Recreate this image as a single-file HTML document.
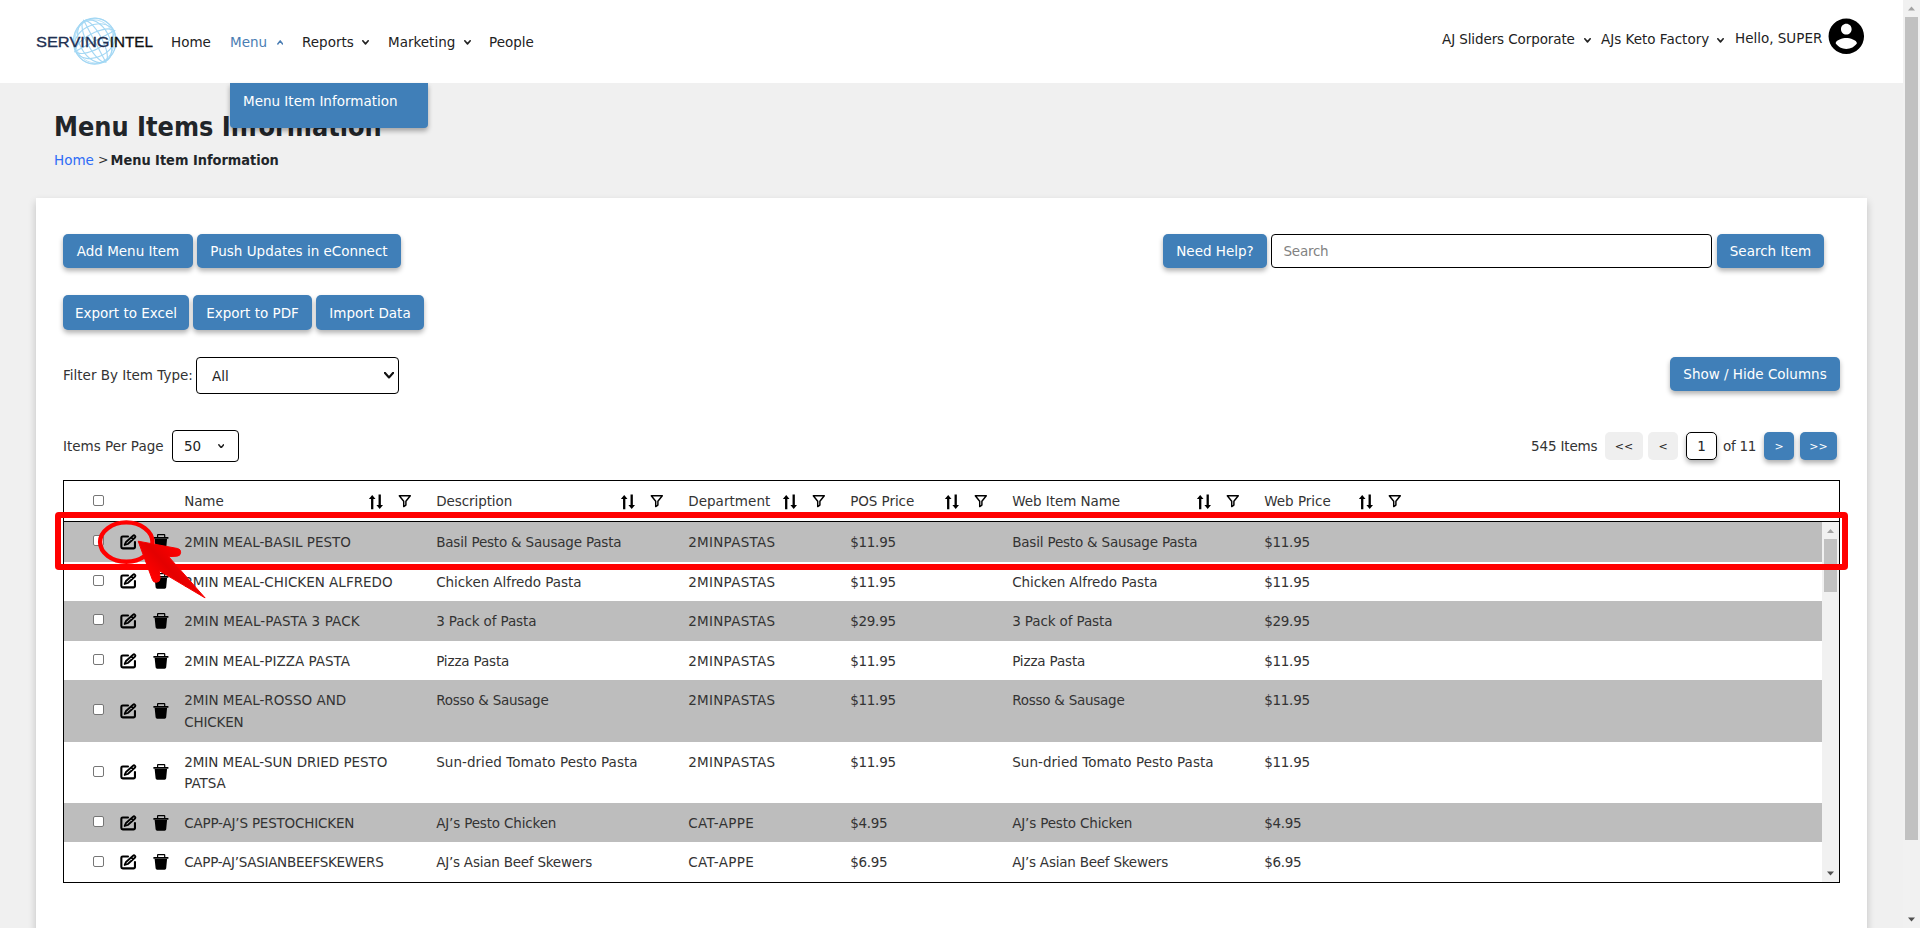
<!DOCTYPE html>
<html lang="en">
<head>
<meta charset="utf-8">
<title>Menu Items Information</title>
<style>
*{box-sizing:border-box}
html,body{margin:0;padding:0}
body{width:1920px;height:928px;overflow:hidden;background:#f0f0f0;font-family:"DejaVu Sans","Liberation Sans",sans-serif;font-size:13.5px;color:#333;position:relative}
.t{position:absolute;white-space:nowrap;line-height:20px;height:20px}
#hdr{position:absolute;left:0;top:0;width:1903px;height:83px;background:#fff}
.btn{position:absolute;height:34px;line-height:35px;background:#407fb8;color:#fff;border-radius:5px;text-align:center;white-space:nowrap;box-shadow:0 3px 5px rgba(0,0,0,.3);font-size:13.5px}
#card{position:absolute;left:36px;top:198px;width:1831px;height:740px;background:#fff;box-shadow:0 4px 8px rgba(0,0,0,.2)}
.box{position:absolute;border:1px solid #000;border-radius:4px;background:#fff}
.pg{position:absolute;top:432px;height:28px;line-height:29px;border-radius:5px;text-align:center;font-size:11px}
.pgg{background:#efefef;color:#222}
.pgb{background:#407fb8;color:#fff;box-shadow:0 3px 5px rgba(0,0,0,.32)}
#tbl{position:absolute;left:63px;top:480px;width:1777px;height:403px;border:1px solid #000;background:#fff;overflow:hidden}
.row{position:absolute;left:0;width:1758px}
.g{background:#bdbdbd}
.c{position:absolute;white-space:nowrap;line-height:22px;height:22px}
.cb{position:absolute;left:29px;width:11px;height:11px;border:1px solid #767676;border-radius:2px;background:#fff}
.ic{position:absolute;display:block}
</style>
</head>
<body>
<div id="hdr">
<svg class="ic" style="left:30px;top:10px" width="130" height="64" viewBox="30 10 130 64">
<g fill="none" stroke="#9fd6f4" stroke-width="1.15" opacity="0.95">
<ellipse cx="94.7" cy="41.2" rx="21.3" ry="23"/>
<ellipse cx="93.9" cy="41.8" rx="20.2" ry="22" stroke-width="0.8"/>
<ellipse cx="95.6" cy="40.6" rx="20.6" ry="22.4" stroke-width="0.7"/>
<g transform="rotate(-28 94.7 41.2)">
<ellipse cx="94.7" cy="41.2" rx="21.3" ry="8"/>
<ellipse cx="94.7" cy="41.2" rx="21.6" ry="16"/>
<ellipse cx="94.7" cy="41.2" rx="7.5" ry="23"/>
<ellipse cx="94.7" cy="41.2" rx="15" ry="23"/>
<line x1="71.5" y1="41.2" x2="118" y2="41.2"/>
<line x1="94.7" y1="17" x2="94.7" y2="65.5"/>
</g>
</g>
<text x="36" y="46.5" font-family="'Liberation Sans',sans-serif" font-size="13.9" font-weight="400" fill="#1f3052" stroke="#1f3052" stroke-width="0.3" textLength="73.5" lengthAdjust="spacingAndGlyphs">SERVING</text>
<text x="109.7" y="46.5" font-family="'Liberation Sans',sans-serif" font-size="13.9" font-weight="400" fill="#111" stroke="#111" stroke-width="0.3" textLength="43.2" lengthAdjust="spacingAndGlyphs">INTEL</text>
</svg>
<span class="t" style="left:171px;top:32px;color:#222">Home</span>
<span class="t" style="left:230px;top:32px;color:#4a7db3">Menu</span>
<span class="t" style="left:302px;top:32px;color:#222">Reports</span>
<span class="t" style="left:388px;top:32px;color:#222">Marketing</span>
<span class="t" style="left:489px;top:32px;color:#222">People</span>
<svg class="ic" style="left:277px;top:39.6px" width="6.4" height="5.2" viewBox="0 0 6.4 5.2"><polyline points="0.8,4.0 3.2,0.9 5.6000000000000005,4.0" fill="none" stroke="#4a7db3" stroke-width="1.5" stroke-linecap="round" stroke-linejoin="round"/></svg>
<svg class="ic" style="left:362px;top:40px" width="7" height="5" viewBox="0 0 7 5"><polyline points="0.8,0.8 3.5,3.9 6.2,0.8" fill="none" stroke="#222" stroke-width="1.6" stroke-linecap="round" stroke-linejoin="round"/></svg>
<svg class="ic" style="left:464px;top:40px" width="7" height="5" viewBox="0 0 7 5"><polyline points="0.8,0.8 3.5,3.9 6.2,0.8" fill="none" stroke="#222" stroke-width="1.6" stroke-linecap="round" stroke-linejoin="round"/></svg>
<span class="t" style="left:1442px;top:29px;color:#222;letter-spacing:-0.1px">AJ Sliders Corporate</span>
<svg class="ic" style="left:1584px;top:38px" width="7" height="5" viewBox="0 0 7 5"><polyline points="0.8,0.8 3.5,3.9 6.2,0.8" fill="none" stroke="#222" stroke-width="1.6" stroke-linecap="round" stroke-linejoin="round"/></svg>
<span class="t" style="left:1601px;top:29px;color:#222">AJs Keto Factory</span>
<svg class="ic" style="left:1717px;top:38px" width="7" height="5" viewBox="0 0 7 5"><polyline points="0.8,0.8 3.5,3.9 6.2,0.8" fill="none" stroke="#222" stroke-width="1.6" stroke-linecap="round" stroke-linejoin="round"/></svg>
<span class="t" style="left:1735px;top:28px;color:#222">Hello, SUPER</span>
<svg class="ic" style="left:1824.6px;top:14.8px" width="42.6" height="42.6" viewBox="0 0 24 24"><path fill="#000" d="M12 2C6.48 2 2 6.48 2 12s4.48 10 10 10 10-4.48 10-10S17.52 2 12 2zm0 3c1.66 0 3 1.34 3 3s-1.34 3-3 3-3-1.34-3-3 1.34-3 3-3zm0 14.2c-2.5 0-4.71-1.28-6-3.22.03-1.99 4-3.08 6-3.08 1.99 0 5.97 1.09 6 3.08-1.29 1.94-3.5 3.22-6 3.22z"/></svg>
</div>
<div class="t" id="ttl" style="left:54px;top:109px;height:36px;line-height:36px;font-family:DejaVu Sans Condensed,DejaVu Sans,sans-serif;font-size:26.8px;font-weight:bold;color:#212529">Menu Items Information</div>
<span class="t" style="left:54px;top:150px;color:#2e6cf6">Home</span><span class="t" style="left:98px;top:150px;color:#333;font-size:12.5px">&gt;</span><b class="t" style="left:110.5px;top:150px;color:#212529;font-family:DejaVu Sans Condensed,DejaVu Sans,sans-serif;font-size:14.4px">Menu Item Information</b>
<div style="position:absolute;left:230px;top:83px;width:198px;height:45px;background:#407fb8;border-radius:0 0 4px 4px;box-shadow:0 3px 5px rgba(0,0,0,.32)"><span class="t" style="left:13px;top:8px;color:#fff">Menu Item Information</span></div>
<div id="card"></div>
<div class="btn" style="left:63px;top:234px;width:130px;height:34px;line-height:35px">Add Menu Item</div>
<div class="btn" style="left:197px;top:234px;width:204px;height:34px;line-height:35px">Push Updates in eConnect</div>
<div class="btn" style="left:1163px;top:234px;width:104px;height:34px;line-height:35px">Need Help?</div>
<div class="box" style="left:1271px;top:234px;width:441px;height:34px"><span class="t" style="left:11.5px;top:6px;color:#828282;letter-spacing:-0.25px">Search</span></div>
<div class="btn" style="left:1717px;top:234px;width:107px;height:34px;line-height:35px">Search Item</div>
<div class="btn" style="left:63px;top:295px;width:126px;height:35px;line-height:36px">Export to Excel</div>
<div class="btn" style="left:193px;top:295px;width:119px;height:35px;line-height:36px">Export to PDF</div>
<div class="btn" style="left:316px;top:295px;width:108px;height:35px;line-height:36px">Import Data</div>
<span class="t" style="left:63px;top:365px">Filter By Item Type:</span>
<div class="box" style="left:196px;top:357px;width:203px;height:37px"><span class="t" style="left:15px;top:8px;color:#222">All</span></div>
<svg class="ic" style="left:384.4px;top:372px" width="10" height="6.6" viewBox="0 0 10 6.6"><polyline points="0.8,0.8 5.0,5.5 9.2,0.8" fill="none" stroke="#111" stroke-width="2.1" stroke-linecap="round" stroke-linejoin="round"/></svg>
<div class="btn" style="left:1670px;top:357px;width:170px;height:34px;line-height:35px">Show / Hide Columns</div>
<span class="t" style="left:63px;top:436px">Items Per Page</span>
<div class="box" style="left:172px;top:430px;width:67px;height:32px"><span class="t" style="left:11px;top:5px;color:#222">50</span></div>
<svg class="ic" style="left:217.8px;top:443.6px" width="6.4" height="4.8" viewBox="0 0 6.4 4.8"><polyline points="0.8,0.8 3.2,3.6999999999999997 5.6000000000000005,0.8" fill="none" stroke="#222" stroke-width="1.5" stroke-linecap="round" stroke-linejoin="round"/></svg>
<span class="t" style="left:1531px;top:436px;letter-spacing:-0.15px">545 Items</span>
<div class="pg pgg" style="left:1605px;width:38px">&lt;&lt;</div>
<div class="pg pgg" style="left:1648px;width:30px">&lt;</div>
<div class="box" style="left:1686px;top:432px;width:31px;height:28px;border-radius:5px;box-shadow:0 3px 5px rgba(0,0,0,.3);text-align:center;line-height:26px;color:#222">1</div>
<span class="t" style="left:1723px;top:436px;letter-spacing:-0.3px">of 11</span>
<div class="pg pgb" style="left:1764px;width:30px">&gt;</div>
<div class="pg pgb" style="left:1800px;width:37px">&gt;&gt;</div>
<div id="tbl">
<div class="row g" style="top:41.0px;height:39.6px"></div>
<div class="row g" style="top:120.2px;height:39.6px"></div>
<div class="row g" style="top:199.4px;height:61.2px"></div>
<div class="row g" style="top:321.8px;height:39.6px"></div>
<div style="position:absolute;left:0;top:40px;width:1775px;height:1px;background:#000"></div>
<div class="cb" style="top:14px"></div>
<span class="c" style="left:120.2px;top:9px;letter-spacing:-0.11px">Name</span>
<svg class="ic" style="left:304px;top:12.5px" width="16" height="16" viewBox="0 0 16 16"><path d="M4.2 0.9 L7.5 4.9 H5.35 V15.25 H3.05 V4.9 H0.9 Z M11.7 14.9 L8.4 10.9 H10.55 V0.5 H12.85 V10.9 H15 Z" fill="#000"/></svg>
<svg class="ic" style="left:333.8px;top:13px" width="14" height="14" viewBox="0 0 14 14"><path d="M1.3 1.7 H12.3 L7.9 7.2 V11.1 L5.7 12.6 V7.2 Z" fill="none" stroke="#000" stroke-width="1.45" stroke-linejoin="round"/></svg>
<span class="c" style="left:372.2px;top:9px;letter-spacing:-0.08px">Description</span>
<svg class="ic" style="left:556px;top:12.5px" width="16" height="16" viewBox="0 0 16 16"><path d="M4.2 0.9 L7.5 4.9 H5.35 V15.25 H3.05 V4.9 H0.9 Z M11.7 14.9 L8.4 10.9 H10.55 V0.5 H12.85 V10.9 H15 Z" fill="#000"/></svg>
<svg class="ic" style="left:585.8px;top:13px" width="14" height="14" viewBox="0 0 14 14"><path d="M1.3 1.7 H12.3 L7.9 7.2 V11.1 L5.7 12.6 V7.2 Z" fill="none" stroke="#000" stroke-width="1.45" stroke-linejoin="round"/></svg>
<span class="c" style="left:624.2px;top:9px;letter-spacing:0.05px">Department</span>
<svg class="ic" style="left:718px;top:12.5px" width="16" height="16" viewBox="0 0 16 16"><path d="M4.2 0.9 L7.5 4.9 H5.35 V15.25 H3.05 V4.9 H0.9 Z M11.7 14.9 L8.4 10.9 H10.55 V0.5 H12.85 V10.9 H15 Z" fill="#000"/></svg>
<svg class="ic" style="left:747.8px;top:13px" width="14" height="14" viewBox="0 0 14 14"><path d="M1.3 1.7 H12.3 L7.9 7.2 V11.1 L5.7 12.6 V7.2 Z" fill="none" stroke="#000" stroke-width="1.45" stroke-linejoin="round"/></svg>
<span class="c" style="left:786.2px;top:9px;letter-spacing:-0.06px">POS Price</span>
<svg class="ic" style="left:880px;top:12.5px" width="16" height="16" viewBox="0 0 16 16"><path d="M4.2 0.9 L7.5 4.9 H5.35 V15.25 H3.05 V4.9 H0.9 Z M11.7 14.9 L8.4 10.9 H10.55 V0.5 H12.85 V10.9 H15 Z" fill="#000"/></svg>
<svg class="ic" style="left:909.8px;top:13px" width="14" height="14" viewBox="0 0 14 14"><path d="M1.3 1.7 H12.3 L7.9 7.2 V11.1 L5.7 12.6 V7.2 Z" fill="none" stroke="#000" stroke-width="1.45" stroke-linejoin="round"/></svg>
<span class="c" style="left:948.2px;top:9px;letter-spacing:-0.05px">Web Item Name</span>
<svg class="ic" style="left:1132px;top:12.5px" width="16" height="16" viewBox="0 0 16 16"><path d="M4.2 0.9 L7.5 4.9 H5.35 V15.25 H3.05 V4.9 H0.9 Z M11.7 14.9 L8.4 10.9 H10.55 V0.5 H12.85 V10.9 H15 Z" fill="#000"/></svg>
<svg class="ic" style="left:1161.8px;top:13px" width="14" height="14" viewBox="0 0 14 14"><path d="M1.3 1.7 H12.3 L7.9 7.2 V11.1 L5.7 12.6 V7.2 Z" fill="none" stroke="#000" stroke-width="1.45" stroke-linejoin="round"/></svg>
<span class="c" style="left:1200.2px;top:9px">Web Price</span>
<svg class="ic" style="left:1294px;top:12.5px" width="16" height="16" viewBox="0 0 16 16"><path d="M4.2 0.9 L7.5 4.9 H5.35 V15.25 H3.05 V4.9 H0.9 Z M11.7 14.9 L8.4 10.9 H10.55 V0.5 H12.85 V10.9 H15 Z" fill="#000"/></svg>
<svg class="ic" style="left:1323.8px;top:13px" width="14" height="14" viewBox="0 0 14 14"><path d="M1.3 1.7 H12.3 L7.9 7.2 V11.1 L5.7 12.6 V7.2 Z" fill="none" stroke="#000" stroke-width="1.45" stroke-linejoin="round"/></svg>
<div class="cb" style="top:54px"></div>
<svg class="ic" style="left:55px;top:51.8px" width="18" height="18" viewBox="0 0 18 18"><path d="M9.0 3.45 H3.75 A1.4 1.4 0 0 0 2.35 4.85 V13.95 A1.4 1.4 0 0 0 3.75 15.35 H14.55 A1.4 1.4 0 0 0 15.95 13.95 V9.0" fill="none" stroke="#000" stroke-width="2.1" stroke-linecap="round"/><g transform="translate(14.95,3.75) rotate(138.5)"><path d="M0,-1.35 H9.4 L12.4,0 L9.4,1.35 H0 A1.35 1.35 0 0 1 0,-1.35 Z M2.5,-1.35 V1.35" fill="none" stroke="#000" stroke-width="1.8" stroke-linejoin="round"/></g></svg>
<svg class="ic" style="left:89px;top:51.8px" width="16" height="18" viewBox="0 0 16 18"><path d="M0.4 4 H4 V2 A1 1 0 0 1 5 1 H11.3 A1 1 0 0 1 12.3 2 V4 H15.4 V5.7 H0.4 Z M5.2 4 H11.1 V2.2 H5.2 Z M1.6 5.6 H14.1 L13.2 15.3 A1.6 1.6 0 0 1 11.6 16.75 H4.2 A1.6 1.6 0 0 1 2.6 15.3 Z" fill="#000" fill-rule="evenodd"/></svg>
<span class="c" style="left:120.2px;top:50px">2MIN MEAL-BASIL PESTO</span>
<span class="c" style="left:372.2px;top:50px;letter-spacing:-0.19px">Basil Pesto &amp; Sausage Pasta</span>
<span class="c" style="left:624.2px;top:50px;letter-spacing:0.28px">2MINPASTAS</span>
<span class="c" style="left:786.2px;top:50px;letter-spacing:-0.28px">$11.95</span>
<span class="c" style="left:948.2px;top:50px;letter-spacing:-0.19px">Basil Pesto &amp; Sausage Pasta</span>
<span class="c" style="left:1200.2px;top:50px;letter-spacing:-0.28px">$11.95</span>
<div class="cb" style="top:94px"></div>
<svg class="ic" style="left:55px;top:91.4px" width="18" height="18" viewBox="0 0 18 18"><path d="M9.0 3.45 H3.75 A1.4 1.4 0 0 0 2.35 4.85 V13.95 A1.4 1.4 0 0 0 3.75 15.35 H14.55 A1.4 1.4 0 0 0 15.95 13.95 V9.0" fill="none" stroke="#000" stroke-width="2.1" stroke-linecap="round"/><g transform="translate(14.95,3.75) rotate(138.5)"><path d="M0,-1.35 H9.4 L12.4,0 L9.4,1.35 H0 A1.35 1.35 0 0 1 0,-1.35 Z M2.5,-1.35 V1.35" fill="none" stroke="#000" stroke-width="1.8" stroke-linejoin="round"/></g></svg>
<svg class="ic" style="left:89px;top:91.4px" width="16" height="18" viewBox="0 0 16 18"><path d="M0.4 4 H4 V2 A1 1 0 0 1 5 1 H11.3 A1 1 0 0 1 12.3 2 V4 H15.4 V5.7 H0.4 Z M5.2 4 H11.1 V2.2 H5.2 Z M1.6 5.6 H14.1 L13.2 15.3 A1.6 1.6 0 0 1 11.6 16.75 H4.2 A1.6 1.6 0 0 1 2.6 15.3 Z" fill="#000" fill-rule="evenodd"/></svg>
<span class="c" style="left:120.2px;top:90px">2MIN MEAL-CHICKEN ALFREDO</span>
<span class="c" style="left:372.2px;top:90px;letter-spacing:-0.06px">Chicken Alfredo Pasta</span>
<span class="c" style="left:624.2px;top:90px;letter-spacing:0.28px">2MINPASTAS</span>
<span class="c" style="left:786.2px;top:90px;letter-spacing:-0.28px">$11.95</span>
<span class="c" style="left:948.2px;top:90px;letter-spacing:-0.06px">Chicken Alfredo Pasta</span>
<span class="c" style="left:1200.2px;top:90px;letter-spacing:-0.28px">$11.95</span>
<div class="cb" style="top:133px"></div>
<svg class="ic" style="left:55px;top:131.0px" width="18" height="18" viewBox="0 0 18 18"><path d="M9.0 3.45 H3.75 A1.4 1.4 0 0 0 2.35 4.85 V13.95 A1.4 1.4 0 0 0 3.75 15.35 H14.55 A1.4 1.4 0 0 0 15.95 13.95 V9.0" fill="none" stroke="#000" stroke-width="2.1" stroke-linecap="round"/><g transform="translate(14.95,3.75) rotate(138.5)"><path d="M0,-1.35 H9.4 L12.4,0 L9.4,1.35 H0 A1.35 1.35 0 0 1 0,-1.35 Z M2.5,-1.35 V1.35" fill="none" stroke="#000" stroke-width="1.8" stroke-linejoin="round"/></g></svg>
<svg class="ic" style="left:89px;top:131.0px" width="16" height="18" viewBox="0 0 16 18"><path d="M0.4 4 H4 V2 A1 1 0 0 1 5 1 H11.3 A1 1 0 0 1 12.3 2 V4 H15.4 V5.7 H0.4 Z M5.2 4 H11.1 V2.2 H5.2 Z M1.6 5.6 H14.1 L13.2 15.3 A1.6 1.6 0 0 1 11.6 16.75 H4.2 A1.6 1.6 0 0 1 2.6 15.3 Z" fill="#000" fill-rule="evenodd"/></svg>
<span class="c" style="left:120.2px;top:129px;letter-spacing:0.09px">2MIN MEAL-PASTA 3 PACK</span>
<span class="c" style="left:372.2px;top:129px;letter-spacing:-0.12px">3 Pack of Pasta</span>
<span class="c" style="left:624.2px;top:129px;letter-spacing:0.28px">2MINPASTAS</span>
<span class="c" style="left:786.2px;top:129px;letter-spacing:-0.28px">$29.95</span>
<span class="c" style="left:948.2px;top:129px;letter-spacing:-0.12px">3 Pack of Pasta</span>
<span class="c" style="left:1200.2px;top:129px;letter-spacing:-0.28px">$29.95</span>
<div class="cb" style="top:173px"></div>
<svg class="ic" style="left:55px;top:170.6px" width="18" height="18" viewBox="0 0 18 18"><path d="M9.0 3.45 H3.75 A1.4 1.4 0 0 0 2.35 4.85 V13.95 A1.4 1.4 0 0 0 3.75 15.35 H14.55 A1.4 1.4 0 0 0 15.95 13.95 V9.0" fill="none" stroke="#000" stroke-width="2.1" stroke-linecap="round"/><g transform="translate(14.95,3.75) rotate(138.5)"><path d="M0,-1.35 H9.4 L12.4,0 L9.4,1.35 H0 A1.35 1.35 0 0 1 0,-1.35 Z M2.5,-1.35 V1.35" fill="none" stroke="#000" stroke-width="1.8" stroke-linejoin="round"/></g></svg>
<svg class="ic" style="left:89px;top:170.6px" width="16" height="18" viewBox="0 0 16 18"><path d="M0.4 4 H4 V2 A1 1 0 0 1 5 1 H11.3 A1 1 0 0 1 12.3 2 V4 H15.4 V5.7 H0.4 Z M5.2 4 H11.1 V2.2 H5.2 Z M1.6 5.6 H14.1 L13.2 15.3 A1.6 1.6 0 0 1 11.6 16.75 H4.2 A1.6 1.6 0 0 1 2.6 15.3 Z" fill="#000" fill-rule="evenodd"/></svg>
<span class="c" style="left:120.2px;top:169px">2MIN MEAL-PIZZA PASTA</span>
<span class="c" style="left:372.2px;top:169px;letter-spacing:-0.16px">Pizza Pasta</span>
<span class="c" style="left:624.2px;top:169px;letter-spacing:0.28px">2MINPASTAS</span>
<span class="c" style="left:786.2px;top:169px;letter-spacing:-0.28px">$11.95</span>
<span class="c" style="left:948.2px;top:169px;letter-spacing:-0.16px">Pizza Pasta</span>
<span class="c" style="left:1200.2px;top:169px;letter-spacing:-0.28px">$11.95</span>
<div class="cb" style="top:223px"></div>
<svg class="ic" style="left:55px;top:221.0px" width="18" height="18" viewBox="0 0 18 18"><path d="M9.0 3.45 H3.75 A1.4 1.4 0 0 0 2.35 4.85 V13.95 A1.4 1.4 0 0 0 3.75 15.35 H14.55 A1.4 1.4 0 0 0 15.95 13.95 V9.0" fill="none" stroke="#000" stroke-width="2.1" stroke-linecap="round"/><g transform="translate(14.95,3.75) rotate(138.5)"><path d="M0,-1.35 H9.4 L12.4,0 L9.4,1.35 H0 A1.35 1.35 0 0 1 0,-1.35 Z M2.5,-1.35 V1.35" fill="none" stroke="#000" stroke-width="1.8" stroke-linejoin="round"/></g></svg>
<svg class="ic" style="left:89px;top:221.0px" width="16" height="18" viewBox="0 0 16 18"><path d="M0.4 4 H4 V2 A1 1 0 0 1 5 1 H11.3 A1 1 0 0 1 12.3 2 V4 H15.4 V5.7 H0.4 Z M5.2 4 H11.1 V2.2 H5.2 Z M1.6 5.6 H14.1 L13.2 15.3 A1.6 1.6 0 0 1 11.6 16.75 H4.2 A1.6 1.6 0 0 1 2.6 15.3 Z" fill="#000" fill-rule="evenodd"/></svg>
<span class="c" style="left:120.2px;top:208px">2MIN MEAL-ROSSO AND</span>
<span class="c" style="left:120.2px;top:230px;letter-spacing:-0.17px">CHICKEN</span>
<span class="c" style="left:372.2px;top:208px;letter-spacing:-0.25px">Rosso &amp; Sausage</span>
<span class="c" style="left:624.2px;top:208px;letter-spacing:0.28px">2MINPASTAS</span>
<span class="c" style="left:786.2px;top:208px;letter-spacing:-0.28px">$11.95</span>
<span class="c" style="left:948.2px;top:208px;letter-spacing:-0.25px">Rosso &amp; Sausage</span>
<span class="c" style="left:1200.2px;top:208px;letter-spacing:-0.28px">$11.95</span>
<div class="cb" style="top:285px"></div>
<svg class="ic" style="left:55px;top:282.2px" width="18" height="18" viewBox="0 0 18 18"><path d="M9.0 3.45 H3.75 A1.4 1.4 0 0 0 2.35 4.85 V13.95 A1.4 1.4 0 0 0 3.75 15.35 H14.55 A1.4 1.4 0 0 0 15.95 13.95 V9.0" fill="none" stroke="#000" stroke-width="2.1" stroke-linecap="round"/><g transform="translate(14.95,3.75) rotate(138.5)"><path d="M0,-1.35 H9.4 L12.4,0 L9.4,1.35 H0 A1.35 1.35 0 0 1 0,-1.35 Z M2.5,-1.35 V1.35" fill="none" stroke="#000" stroke-width="1.8" stroke-linejoin="round"/></g></svg>
<svg class="ic" style="left:89px;top:282.2px" width="16" height="18" viewBox="0 0 16 18"><path d="M0.4 4 H4 V2 A1 1 0 0 1 5 1 H11.3 A1 1 0 0 1 12.3 2 V4 H15.4 V5.7 H0.4 Z M5.2 4 H11.1 V2.2 H5.2 Z M1.6 5.6 H14.1 L13.2 15.3 A1.6 1.6 0 0 1 11.6 16.75 H4.2 A1.6 1.6 0 0 1 2.6 15.3 Z" fill="#000" fill-rule="evenodd"/></svg>
<span class="c" style="left:120.2px;top:270px;letter-spacing:-0.04px">2MIN MEAL-SUN DRIED PESTO</span>
<span class="c" style="left:120.2px;top:291px;letter-spacing:-0.05px">PATSA</span>
<span class="c" style="left:372.2px;top:270px;letter-spacing:0.04px">Sun-dried Tomato Pesto Pasta</span>
<span class="c" style="left:624.2px;top:270px;letter-spacing:0.28px">2MINPASTAS</span>
<span class="c" style="left:786.2px;top:270px;letter-spacing:-0.28px">$11.95</span>
<span class="c" style="left:948.2px;top:270px;letter-spacing:0.04px">Sun-dried Tomato Pesto Pasta</span>
<span class="c" style="left:1200.2px;top:270px;letter-spacing:-0.28px">$11.95</span>
<div class="cb" style="top:335px"></div>
<svg class="ic" style="left:55px;top:332.6px" width="18" height="18" viewBox="0 0 18 18"><path d="M9.0 3.45 H3.75 A1.4 1.4 0 0 0 2.35 4.85 V13.95 A1.4 1.4 0 0 0 3.75 15.35 H14.55 A1.4 1.4 0 0 0 15.95 13.95 V9.0" fill="none" stroke="#000" stroke-width="2.1" stroke-linecap="round"/><g transform="translate(14.95,3.75) rotate(138.5)"><path d="M0,-1.35 H9.4 L12.4,0 L9.4,1.35 H0 A1.35 1.35 0 0 1 0,-1.35 Z M2.5,-1.35 V1.35" fill="none" stroke="#000" stroke-width="1.8" stroke-linejoin="round"/></g></svg>
<svg class="ic" style="left:89px;top:332.6px" width="16" height="18" viewBox="0 0 16 18"><path d="M0.4 4 H4 V2 A1 1 0 0 1 5 1 H11.3 A1 1 0 0 1 12.3 2 V4 H15.4 V5.7 H0.4 Z M5.2 4 H11.1 V2.2 H5.2 Z M1.6 5.6 H14.1 L13.2 15.3 A1.6 1.6 0 0 1 11.6 16.75 H4.2 A1.6 1.6 0 0 1 2.6 15.3 Z" fill="#000" fill-rule="evenodd"/></svg>
<span class="c" style="left:120.2px;top:331px;letter-spacing:-0.19px">CAPP-AJ’S PESTOCHICKEN</span>
<span class="c" style="left:372.2px;top:331px;letter-spacing:-0.17px">AJ’s Pesto Chicken</span>
<span class="c" style="left:624.2px;top:331px;letter-spacing:0.34px">CAT-APPE</span>
<span class="c" style="left:786.2px;top:331px;letter-spacing:-0.29px">$4.95</span>
<span class="c" style="left:948.2px;top:331px;letter-spacing:-0.17px">AJ’s Pesto Chicken</span>
<span class="c" style="left:1200.2px;top:331px;letter-spacing:-0.29px">$4.95</span>
<div class="cb" style="top:375px"></div>
<svg class="ic" style="left:55px;top:372.2px" width="18" height="18" viewBox="0 0 18 18"><path d="M9.0 3.45 H3.75 A1.4 1.4 0 0 0 2.35 4.85 V13.95 A1.4 1.4 0 0 0 3.75 15.35 H14.55 A1.4 1.4 0 0 0 15.95 13.95 V9.0" fill="none" stroke="#000" stroke-width="2.1" stroke-linecap="round"/><g transform="translate(14.95,3.75) rotate(138.5)"><path d="M0,-1.35 H9.4 L12.4,0 L9.4,1.35 H0 A1.35 1.35 0 0 1 0,-1.35 Z M2.5,-1.35 V1.35" fill="none" stroke="#000" stroke-width="1.8" stroke-linejoin="round"/></g></svg>
<svg class="ic" style="left:89px;top:372.2px" width="16" height="18" viewBox="0 0 16 18"><path d="M0.4 4 H4 V2 A1 1 0 0 1 5 1 H11.3 A1 1 0 0 1 12.3 2 V4 H15.4 V5.7 H0.4 Z M5.2 4 H11.1 V2.2 H5.2 Z M1.6 5.6 H14.1 L13.2 15.3 A1.6 1.6 0 0 1 11.6 16.75 H4.2 A1.6 1.6 0 0 1 2.6 15.3 Z" fill="#000" fill-rule="evenodd"/></svg>
<span class="c" style="left:120.2px;top:370px;letter-spacing:-0.28px">CAPP-AJ’SASIANBEEFSKEWERS</span>
<span class="c" style="left:372.2px;top:370px;letter-spacing:-0.23px">AJ’s Asian Beef Skewers</span>
<span class="c" style="left:624.2px;top:370px;letter-spacing:0.34px">CAT-APPE</span>
<span class="c" style="left:786.2px;top:370px;letter-spacing:-0.29px">$6.95</span>
<span class="c" style="left:948.2px;top:370px;letter-spacing:-0.23px">AJ’s Asian Beef Skewers</span>
<span class="c" style="left:1200.2px;top:370px;letter-spacing:-0.29px">$6.95</span>
<div style="position:absolute;left:1758px;top:41px;width:17px;height:360px;background:#f1f1f1"></div>
<div style="position:absolute;left:1760px;top:58px;width:13px;height:53px;background:#c1c1c1"></div>
<svg class="ic" style="left:1758px;top:41px" width="17" height="17" viewBox="0 0 17 17"><path d="M5 11 L8.5 7 L12 11 Z" fill="#a3a3a3"/></svg>
<svg class="ic" style="left:1758px;top:384px" width="17" height="17" viewBox="0 0 17 17"><path d="M5 6.5 L8.5 10.5 L12 6.5 Z" fill="#505050"/></svg>
</div>
<svg class="ic" style="left:0;top:0;pointer-events:none" width="1903" height="928" viewBox="0 0 1903 928">
<defs><linearGradient id="ag" gradientUnits="userSpaceOnUse" x1="150" y1="575" x2="180" y2="548"><stop offset="0" stop-color="#ff0000"/><stop offset="0.45" stop-color="#e40000"/><stop offset="1" stop-color="#ff0000"/></linearGradient></defs>
<rect x="58" y="515" width="1787" height="52" rx="0.8" fill="none" stroke="#ff0000" stroke-width="6" stroke-linejoin="round"/>
<ellipse cx="126.3" cy="542.1" rx="26.2" ry="19.7" fill="none" stroke="#ff0000" stroke-width="4.4"/>
<path d="M138.2,541.2 L177.6,548.5 A3.9 3.9 0 0 1 176.8,556.2 L168.7,556.7 L205.1,597.9 L159.3,570.8 L160.1,578.3 A4 4 0 0 1 152.2,579.2 Z" fill="url(#ag)" stroke="#fa0000" stroke-width="1" stroke-linejoin="round"/>
</svg>
<div style="position:absolute;left:1903px;top:0;width:17px;height:928px;background:#f1f1f1"></div>
<div style="position:absolute;left:1905px;top:17px;width:13px;height:823px;background:#c1c1c1"></div>
<svg class="ic" style="left:1903px;top:0" width="17" height="17" viewBox="0 0 17 17"><path d="M5 10.5 L8.5 6.5 L12 10.5 Z" fill="#a3a3a3"/></svg>
<svg class="ic" style="left:1903px;top:911px" width="17" height="17" viewBox="0 0 17 17"><path d="M5 6.5 L8.5 10.5 L12 6.5 Z" fill="#505050"/></svg>
</body>
</html>
